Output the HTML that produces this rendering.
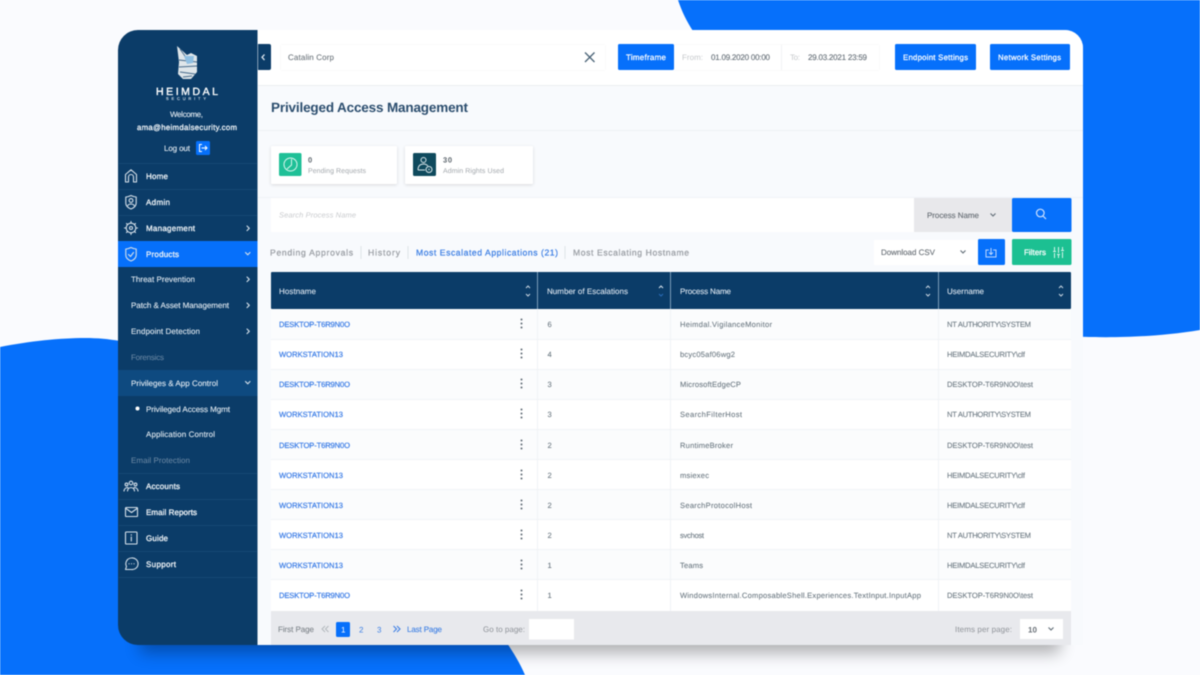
<!DOCTYPE html>
<html lang="en"><head><meta charset="utf-8"><title>Privileged Access Management</title>
<style>
html,body{margin:0;padding:0;width:1200px;height:675px;overflow:hidden;background:#fafbfe}
svg{display:block;filter:blur(.45px)}
text{font-family:"Liberation Sans",sans-serif;font-size:8px;text-rendering:geometricPrecision}
.n{fill:#eef3f7;stroke:#eef3f7;stroke-width:.3}
.s{fill:#e3ebf2;stroke:#e3ebf2;stroke-width:.1}
.d{fill:#6f8ba6}
.r{fill:#6a7780;font-size:7.600px;stroke:#6a7780;stroke-width:.08}
.l{fill:#3a7ce6;font-size:7.600px;stroke:#3a7ce6;stroke-width:.22}
.h{fill:#dbe5ef;stroke:#dbe5ef;stroke-width:.1}
.w{fill:#fff;stroke:#fff;stroke-width:.25}
.t{fill:#9a9ea4;font-size:8.600px;stroke:#9a9ea4;stroke-width:.25}
.ic{fill:none;stroke:#d5e0ea;stroke-width:1.1;stroke-linecap:round;stroke-linejoin:round}
.sep{stroke:#154874;stroke-width:1}
.row{stroke:#f0f3f6;stroke-width:1}
</style></head><body>
<svg width="1200" height="675" viewBox="0 0 1200 675" xmlns="http://www.w3.org/2000/svg">
<defs>
<filter id="sh" x="-10%" y="-50%" width="120%" height="200%"><feGaussianBlur stdDeviation="8"/></filter>
<filter id="soft" x="-10%" y="-20%" width="120%" height="150%"><feDropShadow dx="0" dy="1" stdDeviation="1.5" flood-color="#000" flood-opacity=".13"/></filter>
<filter id="soft2" x="-5%" y="-20%" width="110%" height="140%"><feDropShadow dx="0" dy="0" stdDeviation="1.2" flood-color="#000" flood-opacity=".05"/></filter>
<g id="sort"><path d="M-2-3 0-5 2-3M-2 3 0 5 2 3" fill="none" stroke="#c9d6e2" stroke-width="1"/></g>
<g id="sort2"><path d="M-2-3 0-5 2-3" fill="none" stroke="#dbe5ef" stroke-width="1"/><path d="M-2 3 0 5 2 3" fill="none" stroke="#2a6cb8" stroke-width="1"/></g>
<g id="keb"><circle cx="0" cy="-4" r="1" fill="#5f6b75"/><circle cx="0" cy="0" r="1" fill="#5f6b75"/><circle cx="0" cy="4" r="1" fill="#5f6b75"/></g>
</defs>

<rect width="1200" height="675" fill="#fafbfe"/>
<path d="M678 0C682 12 687 22 693 31L1060 31V336C1085 337 1140 340 1200 330V0Z" fill="#0670fb"/>
<path d="M0 347C30 341 60 338 85 338C98 338 108 339 120 341H160V640H505C513 652 520 663 525 675H0Z" fill="#0670fb"/>
<rect x="140" y="612" width="920" height="41" fill="#000" opacity=".3" filter="url(#sh)"/>

<path d="M140 30H1065A18 18 0 0 1 1083 48V645H140Z" fill="#f8fafd"/>
<path d="M258 30H1065A18 18 0 0 1 1083 48V85H258Z" fill="#fff"/>
<path d="M258 85.500H1083" stroke="#eceef1"/>
<path d="M258 130.500H1083" stroke="#eef1f5"/>
<path d="M258 197.500H1083" stroke="#f0f3f7"/>

<!-- sidebar -->
<path d="M138 30H257.500V645H138A20 20 0 0 1 118 625V50A20 20 0 0 1 138 30Z" fill="#0b3c68"/>
<rect x="118" y="241" width="139.500" height="26" fill="#0670fb"/>
<rect x="118" y="370" width="139.500" height="26" fill="#0e4a80"/>
<path class="sep" d="M119 163.500H257M119 189.500H257M119 215.500H257M119 473.500H257M119 499.500H257M119 525.500H257M119 551.500H257M119 577.500H257"/>

<path d="M177 46 187 55 191 53 197 56 197 72 191 79 183 79 178 74 179 62Z" fill="#dfe6ea"/>
<path d="M179 60 197 62M179 67 197 66M180 72 195 74M183 77 192 76M180 49 187 59" stroke="#45698a" stroke-width=".9" fill="none"/>
<path d="M184 56 194 56 193 63 187 64Z" fill="#8fbfe2"/>
<text x="156" y="95" class="w" style="font-size:10.500px;stroke-width:.35" textLength="62">HEIMDAL</text>
<text x="166" y="100" class="s" style="font-size:4px" textLength="40">SECURITY</text>

<text x="170" y="117" class="s" textLength="33">Welcome,</text>
<text x="137" y="130" class="n" style="font-size:7.800px" textLength="100">ama@heimdalsecurity.com</text>
<text x="164" y="151" class="s" textLength="26">Log out</text>
<rect x="196" y="141" width="14" height="14" rx="1.500" fill="#0670fb"/>
<path d="M202 144.500H199.500V151.500H202M201.500 148H207M205 146 207 148 205 150" fill="none" stroke="#fff" stroke-width="1"/>

<path class="ic" d="M125.500 182V174.500L131 169.800 136.500 174.500V182H133.500V177A2.500 2.500 0 0 0 128.500 177V182Z"/>
<text x="146" y="179" class="n" textLength="22">Home</text>
<path class="ic" d="M131 195.500C128.500 196.800 127 197 125.800 197V203C125.800 206 128.500 208 131 209C133.500 208 136.200 206 136.200 203V197C135 197 133.500 196.800 131 195.500Z"/><circle class="ic" cx="131" cy="200.500" r="1.900"/><path class="ic" d="M127.800 205.500C129 203.500 133 203.500 134.200 205.500"/>
<text x="146" y="205" class="n" textLength="24">Admin</text>
<circle class="ic" cx="131" cy="228" r="4.800" stroke-width="1.500"/><circle class="ic" cx="131" cy="228" r="1.500"/><path class="ic" stroke-width="2" d="M131 221.500V223M131 233V234.500M124.500 228H126M136 228H137.500M126.500 223.500 127.500 224.500M134.500 231.500 135.500 232.500M126.500 232.500 127.500 231.500M134.500 224.500 135.500 223.500"/>
<text x="146" y="231" class="n" textLength="49">Management</text>
<path class="ic" d="M247 226 249.300 228.300 247 230.600" stroke-width="1.200"/>
<path class="ic" d="M131 247.500C128.500 248.800 127 249 125.800 249V255C125.800 258 128.500 260 131 261C133.500 260 136.200 258 136.200 255V249C135 249 133.500 248.800 131 247.500Z"/><path class="ic" d="M128.500 254.500 130.500 256.500 133.500 252.500"/>
<text x="146" y="257" class="n" textLength="33">Products</text>
<path class="ic" d="M245.500 252.500 247.800 254.800 250 252.500" stroke-width="1.200"/>

<text x="131" y="282" class="s" textLength="64">Threat Prevention</text>
<path class="ic" d="M247 277 249.300 279.300 247 281.600" stroke-width="1.200"/>
<text x="131" y="308" class="s" textLength="98">Patch &amp; Asset Management</text>
<path class="ic" d="M247 303 249.300 305.300 247 307.600" stroke-width="1.200"/>
<text x="131" y="334" class="s" textLength="69">Endpoint Detection</text>
<path class="ic" d="M247 329 249.300 331.300 247 333.600" stroke-width="1.200"/>
<text x="131" y="360" class="d" textLength="33">Forensics</text>
<text x="131" y="386" class="s" textLength="87">Privileges &amp; App Control</text>
<path class="ic" d="M245.500 381.500 247.800 383.800 250 381.500" stroke-width="1.200"/>
<circle cx="137.500" cy="408.500" r="2" fill="#fff"/>
<text x="146" y="412" class="s" textLength="84">Privileged Access Mgmt</text>
<text x="146" y="437" class="s" textLength="69">Application Control</text>
<text x="131" y="463" class="d" textLength="59">Email Protection</text>

<circle class="ic" cx="131" cy="483" r="1.800"/><circle class="ic" cx="126.500" cy="484.500" r="1.400"/><circle class="ic" cx="135.500" cy="484.500" r="1.400"/><path class="ic" d="M124 491C124.500 487.500 128 487 128 488M138 491C137.500 487.500 134 487 134 488M127.500 491C128 486.500 134 486.500 134.500 491"/>
<text x="146" y="489" class="n" textLength="34">Accounts</text>
<rect class="ic" x="125.500" y="507.500" width="12" height="9" rx=".8"/><path class="ic" d="M126 508.500 131.500 512.500 137 508.500"/>
<text x="146" y="515" class="n" textLength="51">Email Reports</text>
<rect class="ic" x="125.500" y="532" width="11.500" height="12" rx=".8"/><path class="ic" d="M131.300 537V541M131.300 534.700V535.200"/>
<text x="146" y="541" class="n" textLength="22">Guide</text>
<path class="ic" d="M131.500 558A5.800 5.800 0 1 1 131.500 569.500H125.500L126.500 566.500A5.800 5.800 0 0 1 131.500 558Z"/><path class="ic" d="M129 563.800H129.100M131.500 563.800H131.600M134 563.800H134.100"/>
<text x="146" y="567" class="n" textLength="30">Support</text>

<!-- top bar -->
<path d="M258 44H269A2 2 0 0 1 271 46V68A2 2 0 0 1 269 70H258Z" fill="#0b3c68"/>
<path d="M264.500 54.500 262 57.300 264.500 60" fill="none" stroke="#dbe5ee" stroke-width="1.300"/>
<rect x="281" y="45" width="324" height="25" rx="2" fill="#fff" filter="url(#soft2)"/>
<text x="288" y="60" fill="#6f777e" stroke="#6f777e" stroke-width=".1" textLength="46">Catalin Corp</text>
<path d="M585 52.500 594.500 62M594.500 52.500 585 62" stroke="#4a6377" stroke-width="1.300"/>
<rect x="618" y="44" width="56" height="26" rx="1.500" fill="#0670fb"/>
<text x="626" y="60" class="w" textLength="40">Timeframe</text>
<rect x="674" y="45" width="205" height="25" rx="2" fill="#fff" filter="url(#soft2)"/>
<path d="M781.500 45V70" stroke="#f1f3f5"/>
<text x="682" y="60" fill="#c6c9cc" textLength="21">From:</text>
<text x="711" y="60" fill="#606a73" stroke="#606a73" stroke-width=".08" textLength="59">01.09.2020 00:00</text>
<text x="790" y="60" fill="#c6c9cc" textLength="10">To:</text>
<text x="808" y="60" fill="#606a73" stroke="#606a73" stroke-width=".08" textLength="59">29.03.2021 23:59</text>
<rect x="895" y="44" width="81" height="26" rx="1.500" fill="#0670fb"/>
<text x="903" y="60" class="w" style="font-size:7.800px" textLength="65">Endpoint Settings</text>
<rect x="990" y="44" width="80" height="26" rx="1.500" fill="#0670fb"/>
<text x="998" y="60" class="w" style="font-size:7.800px" textLength="63">Network Settings</text>

<text x="271" y="112" fill="#2b4d6e" style="font-size:13.500px;font-weight:700" textLength="197">Privileged Access Management</text>

<!-- stat cards -->
<rect x="271" y="146" width="126" height="38" rx="1.500" fill="#fff" filter="url(#soft)"/>
<rect x="279" y="153" width="22.500" height="23" rx="1.500" fill="#1fc097"/>
<circle cx="290.500" cy="164.500" r="6.500" fill="none" stroke="#d9f6ee" stroke-width="1"/><path d="M291.500 159V165L287 169" fill="none" stroke="#d9f6ee" stroke-width="1"/>
<text x="308" y="162.500" fill="#5e676e" style="font-size:7.500px;font-weight:700" textLength="4.500">0</text>
<text x="308" y="173" fill="#a3a8ad" style="font-size:7px" textLength="58">Pending Requests</text>
<rect x="405" y="146" width="128" height="38" rx="1.500" fill="#fff" filter="url(#soft)"/>
<rect x="413" y="153" width="23" height="23" rx="1.500" fill="#0f4a5d"/>
<circle cx="423.500" cy="160" r="2.500" fill="none" stroke="#d8e6ea"/><path d="M418 170C418 165 421 164 424 164C426 164 427 165 428 166M418 170H425" fill="none" stroke="#d8e6ea"/><circle cx="429" cy="169.500" r="3" fill="none" stroke="#d8e6ea"/><circle cx="429" cy="169.500" r=".7" fill="#d8e6ea"/>
<text x="443" y="162.500" fill="#5e676e" style="font-size:7.500px;font-weight:700" textLength="9">30</text>
<text x="443" y="173" fill="#a3a8ad" style="font-size:7px" textLength="61">Admin Rights Used</text>

<!-- search -->
<rect x="271" y="198" width="643" height="34" fill="#fff"/>
<text x="279" y="217.500" fill="#c8cacd" style="font-size:7.500px;font-style:italic" textLength="77">Search Process Name</text>
<rect x="914" y="198" width="98" height="34" fill="#e8e8eb"/>
<text x="927" y="218" fill="#636a71" stroke="#636a71" stroke-width=".1" textLength="52">Process Name</text>
<path d="M990.500 213.500 993 216 995.500 213.500" fill="none" stroke="#5f6b75" stroke-width="1.100"/>
<rect x="1012" y="198" width="59.500" height="34" rx="1.500" fill="#0670fb"/>
<circle cx="1040.300" cy="213" r="3.800" fill="none" stroke="#cfe2ff" stroke-width="1.200"/><path d="M1043 216 1046 219" stroke="#cfe2ff" stroke-width="1.200"/>

<!-- tabs -->
<text x="270" y="255.500" class="t" textLength="83">Pending Approvals</text>
<path d="M361 246V259M408 246V259M565 246V259" stroke="#dfe3e7"/>
<text x="368" y="255.500" class="t" textLength="32">History</text>
<text x="416" y="255.500" style="font-size:8.600px;fill:#3f80e4;stroke:#3f80e4;stroke-width:.25" textLength="142">Most Escalated Applications (21)</text>
<text x="573" y="255.500" class="t" textLength="116">Most Escalating Hostname</text>

<rect x="874" y="240" width="104" height="25" fill="#fff"/>
<text x="881" y="255" fill="#636a71" stroke="#636a71" stroke-width=".1" textLength="54">Download CSV</text>
<path d="M960.500 250.500 963 253 965.500 250.500" fill="none" stroke="#5f6b75" stroke-width="1.100"/>
<rect x="978" y="239" width="27" height="26" rx="1.500" fill="#0670fb"/>
<path d="M988.800 250H986V257H996V250H993.200M991 248V254M989 252.500 991 254.500 993 252.500" fill="none" stroke="#bcd7ff" stroke-width="1"/>
<rect x="1012" y="239" width="59.500" height="26" rx="1.500" fill="#1cc092"/>
<text x="1024" y="255" class="w" textLength="22">Filters</text>
<path d="M1054.500 247V251M1054.500 253V258M1058.500 247V253M1058.500 255V258M1062.500 247V250M1062.500 252V258M1053 251.500 1056 251.500M1057 254.500 1060 254.500M1061 250.500 1064 250.500" stroke="#d5f5ec" stroke-width="1" fill="none"/>

<!-- table -->
<rect x="271" y="272" width="800" height="37" rx="1" fill="#0b3c68"/>
<path d="M537.500 272V309M670.500 272V309M938.500 272V309" stroke="#7b9cb8"/>
<text x="279" y="294" class="h" textLength="37">Hostname</text>
<text x="547" y="294" class="h" textLength="81">Number of Escalations</text>
<text x="680" y="294" class="h" textLength="51">Process Name</text>
<text x="947" y="294" class="h" textLength="37">Username</text>
<use href="#sort" x="528" y="291"/><use href="#sort2" x="661" y="291"/><use href="#sort" x="928" y="291"/><use href="#sort" x="1061" y="291"/>

<rect x="271" y="309" width="800" height="302" fill="#fff"/>
<rect x="271" y="309" width="800" height="30" fill="#fbfcfd"/>
<rect x="271" y="369" width="800" height="30" fill="#fbfcfd"/>
<rect x="271" y="430" width="800" height="30" fill="#fbfcfd"/>
<rect x="271" y="490" width="800" height="30" fill="#fbfcfd"/>
<rect x="271" y="550" width="800" height="30" fill="#fbfcfd"/>
<path class="row" d="M537.500 309V611M670.500 309V611M938.500 309V611"/>
<path class="row" d="M271 339.500H1071M271 369.500H1071M271 399.500H1071M271 429.500H1071M271 459.500H1071M271 489.500H1071M271 519.500H1071M271 549.500H1071M271 579.500H1071"/>

<text x="279" y="327" class="l" textLength="71">DESKTOP-T6R9N0O</text><use href="#keb" x="521.500" y="323.500"/><text x="547.500" y="327" class="r" textLength="4.500">6</text><text x="680" y="327" class="r" textLength="92">Heimdal.VigilanceMonitor</text><text x="947" y="327" class="r" textLength="84">NT AUTHORITY\SYSTEM</text>
<text x="279" y="357" class="l" textLength="64">WORKSTATION13</text><use href="#keb" x="521.500" y="353.500"/><text x="547.500" y="357" class="r" textLength="4.500">4</text><text x="680" y="357" class="r" textLength="55">bcyc05af06wg2</text><text x="947" y="357" class="r" textLength="78">HEIMDALSECURITY\clf</text>
<text x="279" y="387" class="l" textLength="71">DESKTOP-T6R9N0O</text><use href="#keb" x="521.500" y="383.500"/><text x="547.500" y="387" class="r" textLength="4.500">3</text><text x="680" y="387" class="r" textLength="61">MicrosoftEdgeCP</text><text x="947" y="387" class="r" textLength="86">DESKTOP-T6R9N0O\test</text>
<text x="279" y="417" class="l" textLength="64">WORKSTATION13</text><use href="#keb" x="521.500" y="413.500"/><text x="547.500" y="417" class="r" textLength="4.500">3</text><text x="680" y="417" class="r" textLength="62">SearchFilterHost</text><text x="947" y="417" class="r" textLength="84">NT AUTHORITY\SYSTEM</text>
<text x="279" y="448" class="l" textLength="71">DESKTOP-T6R9N0O</text><use href="#keb" x="521.500" y="444.500"/><text x="547.500" y="448" class="r" textLength="4.500">2</text><text x="680" y="448" class="r" textLength="53">RuntimeBroker</text><text x="947" y="448" class="r" textLength="86">DESKTOP-T6R9N0O\test</text>
<text x="279" y="478" class="l" textLength="64">WORKSTATION13</text><use href="#keb" x="521.500" y="474.500"/><text x="547.500" y="478" class="r" textLength="4.500">2</text><text x="680" y="478" class="r" textLength="29">msiexec</text><text x="947" y="478" class="r" textLength="78">HEIMDALSECURITY\clf</text>
<text x="279" y="508" class="l" textLength="64">WORKSTATION13</text><use href="#keb" x="521.500" y="504.500"/><text x="547.500" y="508" class="r" textLength="4.500">2</text><text x="680" y="508" class="r" textLength="72">SearchProtocolHost</text><text x="947" y="508" class="r" textLength="78">HEIMDALSECURITY\clf</text>
<text x="279" y="538" class="l" textLength="64">WORKSTATION13</text><use href="#keb" x="521.500" y="534.500"/><text x="547.500" y="538" class="r" textLength="4.500">2</text><text x="680" y="538" class="r" textLength="24">svchost</text><text x="947" y="538" class="r" textLength="84">NT AUTHORITY\SYSTEM</text>
<text x="279" y="568" class="l" textLength="64">WORKSTATION13</text><use href="#keb" x="521.500" y="564.500"/><text x="547.500" y="568" class="r" textLength="4.500">1</text><text x="680" y="568" class="r" textLength="23">Teams</text><text x="947" y="568" class="r" textLength="78">HEIMDALSECURITY\clf</text>
<text x="279" y="598" class="l" textLength="71">DESKTOP-T6R9N0O</text><use href="#keb" x="521.500" y="594.500"/><text x="547.500" y="598" class="r" textLength="4.500">1</text><text x="680" y="598" class="r" textLength="241">WindowsInternal.ComposableShell.Experiences.TextInput.InputApp</text><text x="947" y="598" class="r" textLength="86">DESKTOP-T6R9N0O\test</text>

<!-- pagination -->
<rect x="271" y="611" width="800" height="34" fill="#e8e9ed"/>
<text x="278" y="632" fill="#7f858b" stroke="#7f858b" stroke-width=".1" textLength="36">First Page</text>
<path d="M325 626 322 629 325 632M328.500 626 325.500 629 328.500 632" fill="none" stroke="#b3b8bd" stroke-width="1"/>
<rect x="336" y="622" width="14" height="15" rx="1.500" fill="#0670fb"/>
<text x="341" y="632.500" fill="#fff" textLength="4">1</text>
<text x="359" y="632.500" fill="#3f80e4" textLength="4">2</text>
<text x="377" y="632.500" fill="#3f80e4" textLength="4">3</text>
<path d="M393.500 626 396.500 629 393.500 632M397 626 400 629 397 632" fill="none" stroke="#3f80e4" stroke-width="1.100"/>
<text x="407" y="632" fill="#3f80e4" stroke="#3f80e4" stroke-width=".1" textLength="35">Last Page</text>
<text x="483" y="632" fill="#8f9399" textLength="42">Go to page:</text>
<rect x="529" y="619" width="45" height="20.500" fill="#fff"/>
<text x="955" y="632" fill="#8f9399" textLength="57">Items per page:</text>
<rect x="1020" y="619" width="43" height="20" fill="#fff"/>
<text x="1028" y="632.500" fill="#6b7279" style="font-weight:700" textLength="9">10</text>
<path d="M1048.500 627.500 1051 630 1053.500 627.500" fill="none" stroke="#5f6b75" stroke-width="1.100"/>
</svg>
</body></html>
